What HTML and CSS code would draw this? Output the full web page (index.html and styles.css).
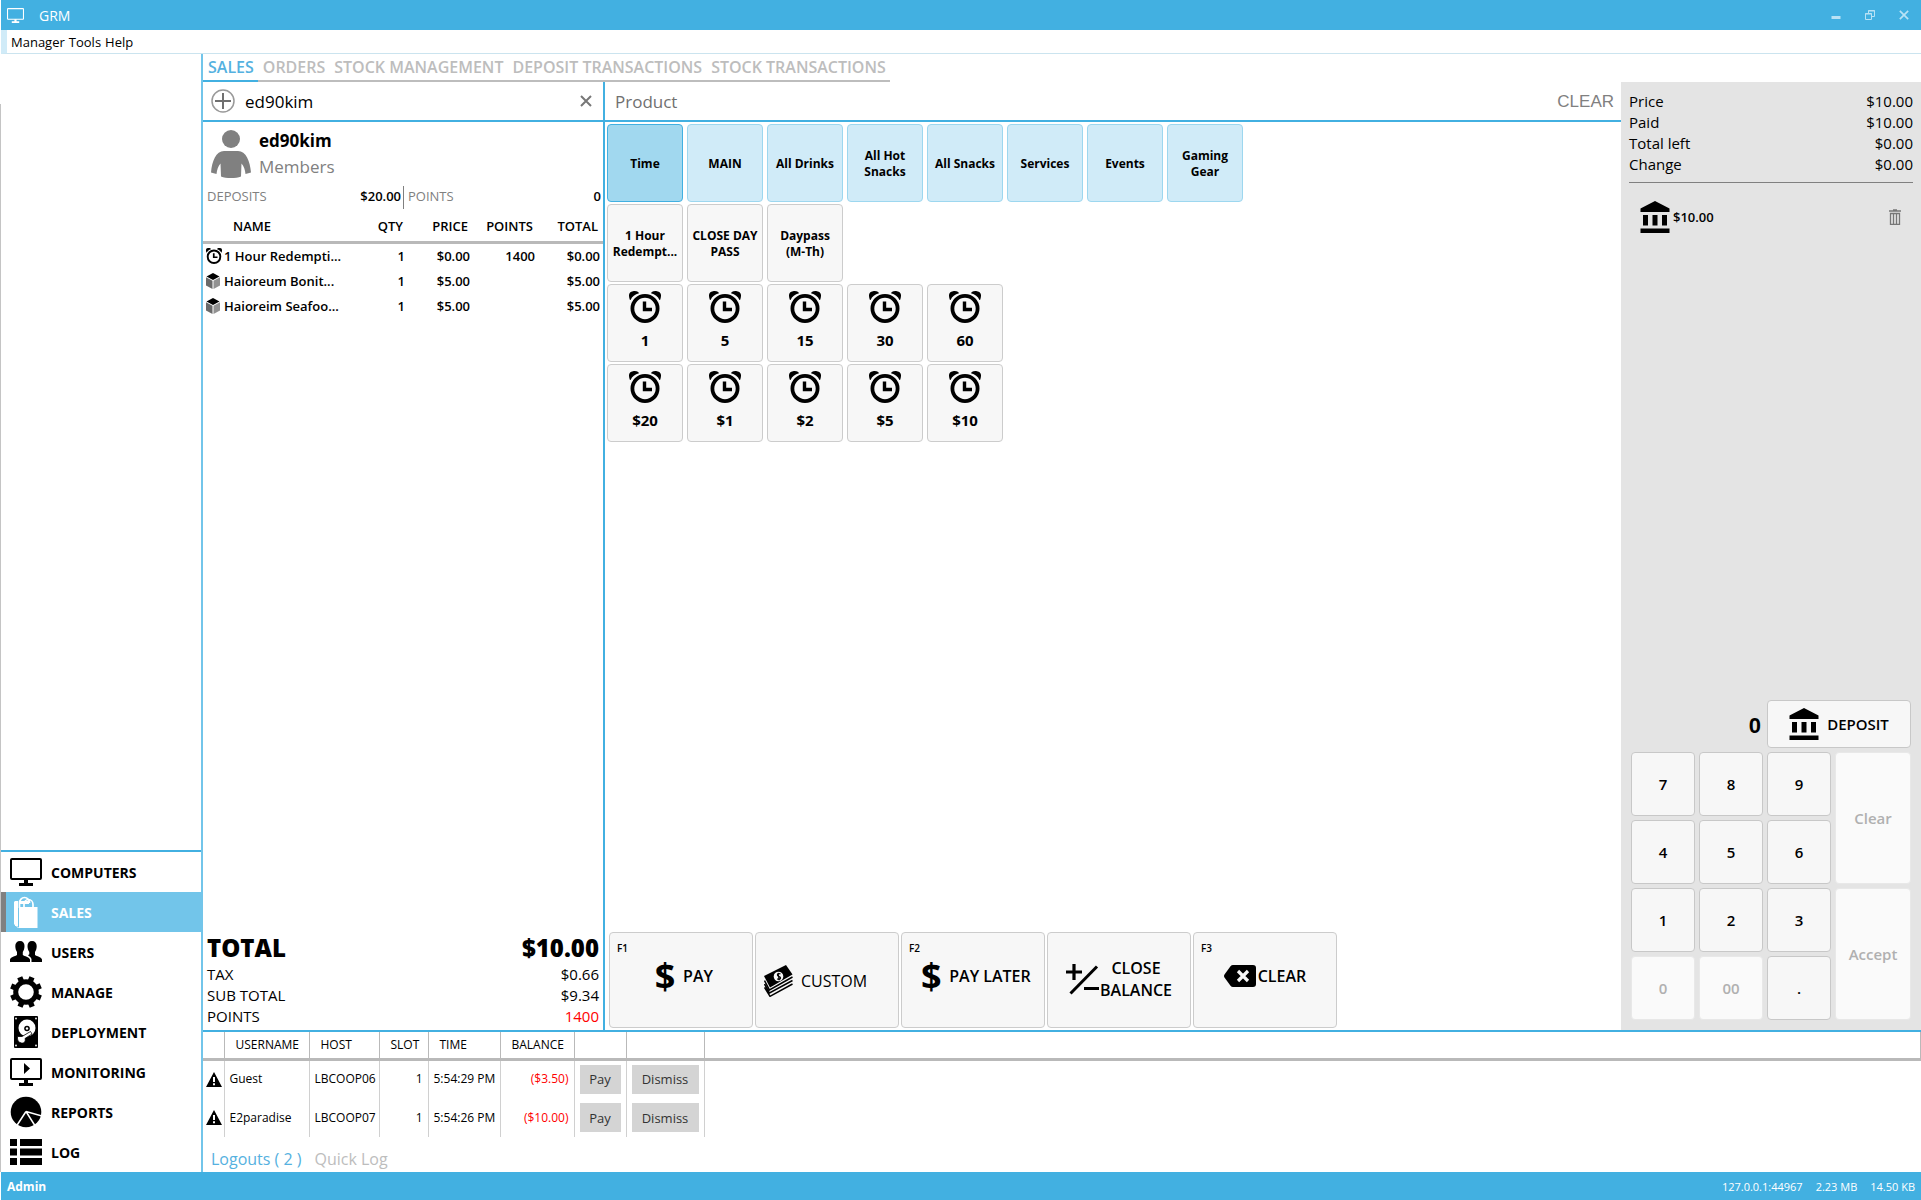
FILE: index.html
```html
<!DOCTYPE html>
<html lang="en">
<head>
<meta charset="utf-8">
<title>GRM</title>
<link rel="stylesheet" href="styles.css">
</head>
<body>
<svg class="defs" aria-hidden="true">
  <symbol id="monitor" viewBox="0 0 32 28"><rect x="1" y="1" width="30" height="20" rx="1" fill="none" stroke="currentColor" stroke-width="2"/><path d="M14 21h4v4h5v3H9v-3h5z" fill="currentColor"/></symbol>
  <symbol id="monitoring" viewBox="0 0 32 28"><rect x="1" y="1" width="30" height="20" rx="1" fill="none" stroke="currentColor" stroke-width="2"/><path d="M14 21h4v4h5v3H9v-3h5zM14 5l6 5.500-6 5.500z" fill="currentColor"/></symbol>
  <symbol id="bag" viewBox="0 0 32 32"><path d="M9.500 12V7a5 5.500 0 0 1 10 0M14 12V8.500a4.500 5 0 0 1 9 0V12" fill="none" stroke="currentColor" stroke-width="1.700"/><path d="M4.500 5H8v3H6.500l-.5 3v19l-1.500-2zM9 5h10v3H9z" fill="currentColor"/><path d="M5 8h3v22H5zM9 11H27.500v21H9z" fill="currentColor"/><path d="M4.500 6v22l4 4h2" fill="none" stroke="currentColor"/></symbol>
  <symbol id="users" viewBox="0 0 32 22"><path d="M10 0c3 0 4.500 2 4.500 5 0 2.500-.7 4.500-1.700 6v3c2 1.500 6 1.500 7.200 4.500V21H0v-2.500C1 15.500 5 15.500 7 14v-3C6 9.500 5.300 7.500 5.300 5 5.300 2 7 0 10 0z" fill="currentColor"/><path d="M22 0c3 0 4.700 2 4.700 5 0 2.500-.7 4.500-1.700 6v3c2 1.500 6 1.500 7 4.500V21H21.500v-3c-.5-2-2.500-3-3.500-3.800l1.300-1V11c-1-1.500-1.800-3.500-1.800-6C17.500 2 19 0 22 0z" fill="currentColor"/></symbol>
  <symbol id="gear" viewBox="0 0 32 32"><circle cx="16" cy="16" r="10.300" fill="none" stroke="currentColor" stroke-width="5"/><g fill="currentColor" transform="rotate(22 16 16)"><path id="teeth" d="M13.300 4.500V0h5.400v4.500zM13.300 27.500V32h5.400v-4.500zM4.500 13.300H0v5.400h4.500zM27.500 13.300H32v5.400h-4.500z"/><use href="#teeth" transform="rotate(45 16 16)"/></g></symbol>
  <symbol id="disk" viewBox="0 0 32 32"><rect x="4" width="24" height="32" rx="1" fill="currentColor"/><circle cx="17" cy="12" r="8.500" fill="#fff"/><circle cx="17" cy="12.500" r="2.800" fill="currentColor"/><circle cx="17" cy="12.500" r="1.200" fill="#fff"/><path d="M7.500 20.500h4.500l8.500-5 1.500 2.500-7 4.500c1 3-1 5-3.500 4.500C8.500 26.700 7 24 7.500 20.500z" fill="#fff" stroke="currentColor" stroke-width=".8"/><g fill="#fff"><circle cx="6" cy="2.500" r=".9"/><circle cx="26" cy="2.500" r=".9"/><circle cx="6" cy="29.500" r=".9"/><circle cx="26" cy="29.500" r=".9"/></g></symbol>
  <symbol id="pie" viewBox="0 0 32 32"><circle cx="16" cy="16" r="15.300" fill="currentColor"/><path d="M16 15.500l16 4.500M16 15.500l9.500 15M16 15.500L6.500 30" stroke="#fff" stroke-width="1.500"/></symbol>
  <symbol id="list" viewBox="0 0 32 26"><path d="M0 0h7v7H0zM10 0h22v7H10zM0 9.500h7v7H0zM10 9.500h22v7H10zM0 19h7v7H0zM10 19h22v7H10z" fill="currentColor"/></symbol>
  <symbol id="clock" viewBox="0 0 32 32"><circle cx="16" cy="17.500" r="12.600" fill="none" stroke="currentColor" stroke-width="3.800"/><path d="M15.500 10.500v8h7.500" fill="none" stroke="currentColor" stroke-width="3.400"/><path d="M.8 8.800C-.8 4-.2.600 4 .2c2-.3 4 0 5.200.7L10 2.300C6 3.200 3 5.500 1.600 9zM31.200 8.800C32.800 4 32.200.600 28 .2c-2-.3-4 0-5.200.7L22 2.300c4 .9 7 3.200 8.400 6.700z" fill="currentColor"/></symbol>
  <symbol id="cube" viewBox="0 0 14 16"><path d="M7 0l6.500 3.400L7 7 .5 3.400z" fill="#000"/><path d="M0 4.200l6.500 3.600V16L0 12.500z" fill="#6a6a6a"/><path d="M14 4.200L7.500 7.800V16l6.500-3.500z" fill="#929292"/></symbol>
  <symbol id="person" viewBox="0 0 40 48"><circle cx="20" cy="9" r="9" fill="currentColor"/><path d="M13 21h14c8 0 12 10 13 21.500l-5.500 1.500c-.5-4-1.500-8-4-10.500l-.5 13c-5 2-15 2-20 0l-.5-13C7 36 6 40 5.500 44L0 42.500C1 31 5 21 13 21z" fill="currentColor"/></symbol>
  <symbol id="bank" viewBox="0 0 30 32"><path d="M15 0l14.500 7.500V11H.5V7.500zM3 14h5v10.500H3zM12.500 14h5v10.500h-5zM22 14h5v10.500h-5zM.5 27.500h29V32H.5z" fill="currentColor"/></symbol>
  <symbol id="trash" viewBox="0 0 12 16"><path d="M0 2h12M4 1h4M1.500 4.500h9V15.500h-9zM4.500 5v10M7.500 5v10" fill="none" stroke="currentColor" stroke-width="1.300"/></symbol>
  <symbol id="plus" viewBox="0 0 24 24"><circle cx="12" cy="12" r="11" fill="none" stroke="#999" stroke-width="1.500"/><path d="M12 4v16M4 12h16" stroke="#707070" stroke-width="2"/></symbol>
  <symbol id="cross" viewBox="0 0 12 12"><path d="M1 1l10 10M11 1L1 11" stroke="currentColor" stroke-width="2"/></symbol>
  <symbol id="cash" viewBox="0 0 30 32"><path d="M0 11L22 0l6.500 9.500L6 22.500z" fill="currentColor"/><ellipse cx="14.500" cy="11.500" rx="4.800" ry="4.800" fill="#f7f7f7"/><path d="M16.500 9c-2-1.200-4 .3-2.600 1.800 1 1 2.600.6 2.600 2.200 0 1.500-2 1.800-3.300.8M14 7.800l1.300 7.500" fill="none" stroke="currentColor" stroke-width="1.200"/><path d="M.5 15.500l5 9.500L28.500 12M.5 19l5 9L28.500 15.500M.5 22.500L6 31.300 28.500 19" fill="none" stroke="currentColor" stroke-width="1.500"/></symbol>
  <symbol id="plusminus" viewBox="0 0 34 32"><path d="M0 9h16M8 1v16M18 25.500h15" stroke="currentColor" stroke-width="3.200"/><path d="M4.500 30.500L31 3.500" stroke="currentColor" stroke-width="3"/></symbol>
  <symbol id="erase" viewBox="0 0 32 22"><path d="M9 0h20a3 3 0 0 1 3 3v16a3 3 0 0 1-3 3H9q-1.500 0-2.500-1.200L.5 12.500q-1-1.500 0-3L6.500 1.200Q7.500 0 9 0z" fill="currentColor"/><path d="M14 6l10 10M24 6L14 16" stroke="#f7f7f7" stroke-width="3.200"/></symbol>
  <symbol id="warning" viewBox="0 0 16 15"><path d="M8 0l8 15H0z" fill="currentColor"/><path d="M8 5v5M8 11.300v2" stroke="#fff" stroke-width="2"/></symbol>
  <symbol id="minimize" viewBox="0 0 10 10"><path d="M.5 7.500h9" stroke="currentColor" stroke-width="3"/></symbol>
  <symbol id="restore" viewBox="0 0 10 10"><path d="M.5 3.500h6v6h-6zM3.500 3.500v-3h6v6h-3" fill="none" stroke="currentColor"/><path d="M3 1h7M0 4h7" stroke="currentColor"/></symbol>
</svg>

<div class="app">
  <header class="titlebar">
    <svg class="title-icon"><use href="#monitor"/></svg>
    <h1>GRM</h1>
    <div class="window-buttons">
      <button type="button" aria-label="Minimize"><svg><use href="#minimize"/></svg></button>
      <button type="button" aria-label="Restore"><svg><use href="#restore"/></svg></button>
      <button type="button" aria-label="Close"><svg><use href="#cross"/></svg></button>
    </div>
  </header>
  <nav class="menubar"><a href="#">Manager</a><a href="#">Tools</a><a href="#">Help</a></nav>

  <div class="body">
    <aside class="sidebar">
      <nav class="modules">
        <a href="#"><svg class="h28"><use href="#monitor"/></svg><span>COMPUTERS</span></a>
        <a href="#" class="active"><svg><use href="#bag"/></svg><span>SALES</span></a>
        <a href="#"><svg class="h22"><use href="#users"/></svg><span>USERS</span></a>
        <a href="#"><svg><use href="#gear"/></svg><span>MANAGE</span></a>
        <a href="#"><svg><use href="#disk"/></svg><span>DEPLOYMENT</span></a>
        <a href="#"><svg class="h28"><use href="#monitoring"/></svg><span>MONITORING</span></a>
        <a href="#"><svg><use href="#pie"/></svg><span>REPORTS</span></a>
        <a href="#"><svg class="h26"><use href="#list"/></svg><span>LOG</span></a>
      </nav>
    </aside>

    <main class="content">
      <nav class="tabs">
        <a href="#" class="active">SALES</a><a href="#">ORDERS</a><a href="#">STOCK MANAGEMENT</a><a href="#">DEPOSIT TRANSACTIONS</a><a href="#">STOCK TRANSACTIONS</a>
      </nav>

      <div class="workspace">
        <section class="order">
          <div class="search">
            <button type="button" aria-label="Add"><svg class="plus"><use href="#plus"/></svg></button>
            <input type="text" value="ed90kim" aria-label="Customer">
            <button type="button" aria-label="Remove customer"><svg class="cross"><use href="#cross"/></svg></button>
          </div>
          <div class="customer">
            <svg><use href="#person"/></svg>
            <div><h2>ed90kim</h2><p>Members</p></div>
          </div>
          <div class="balances">
            <div><span>DEPOSITS</span><b>$20.00</b></div>
            <div><span>POINTS</span><b>0</b></div>
          </div>
          <table class="lines">
            <thead><tr><th>NAME</th><th>QTY</th><th>PRICE</th><th>POINTS</th><th>TOTAL</th></tr></thead>
            <tbody>
              <tr><td><svg class="time"><use href="#clock"/></svg>1 Hour Redempti...</td><td>1</td><td>$0.00</td><td>1400</td><td>$0.00</td></tr>
              <tr><td><svg><use href="#cube"/></svg>Haioreum Bonit...</td><td>1</td><td>$5.00</td><td></td><td>$5.00</td></tr>
              <tr><td><svg><use href="#cube"/></svg>Haioreim Seafoo...</td><td>1</td><td>$5.00</td><td></td><td>$5.00</td></tr>
            </tbody>
          </table>
          <dl class="totals">
            <div class="grand"><dt>TOTAL</dt><dd>$10.00</dd></div>
            <div><dt>TAX</dt><dd>$0.66</dd></div>
            <div><dt>SUB TOTAL</dt><dd>$9.34</dd></div>
            <div><dt>POINTS</dt><dd class="red">1400</dd></div>
          </dl>
        </section>

        <section class="products">
          <div class="product-search">
            <input type="text" placeholder="Product" aria-label="Product">
            <button type="button">CLEAR</button>
          </div>
          <div class="tile-rows">
            <div class="tiles groups">
              <button type="button" class="selected">Time</button><button type="button">MAIN</button><button type="button">All Drinks</button><button type="button">All Hot Snacks</button><button type="button">All Snacks</button><button type="button">Services</button><button type="button">Events</button><button type="button">Gaming Gear</button>
            </div>
            <div class="tiles">
              <button type="button">1 Hour Redempt...</button><button type="button">CLOSE DAY PASS</button><button type="button">Daypass<br>(M-Th)</button>
            </div>
            <div class="tiles times">
              <button type="button"><svg><use href="#clock"/></svg>1</button><button type="button"><svg><use href="#clock"/></svg>5</button><button type="button"><svg><use href="#clock"/></svg>15</button><button type="button"><svg><use href="#clock"/></svg>30</button><button type="button"><svg><use href="#clock"/></svg>60</button>
            </div>
            <div class="tiles times">
              <button type="button"><svg><use href="#clock"/></svg>$20</button><button type="button"><svg><use href="#clock"/></svg>$1</button><button type="button"><svg><use href="#clock"/></svg>$2</button><button type="button"><svg><use href="#clock"/></svg>$5</button><button type="button"><svg><use href="#clock"/></svg>$10</button>
            </div>
          </div>
          <div class="actions">
            <button type="button"><kbd>F1</kbd><span class="dollar">$</span>PAY</button>
            <button type="button" class="custom"><svg class="cash"><use href="#cash"/></svg>CUSTOM</button>
            <button type="button"><kbd>F2</kbd><span class="dollar">$</span>PAY LATER</button>
            <button type="button" class="close"><svg class="plusminus"><use href="#plusminus"/></svg><span>CLOSE<br>BALANCE</span></button>
            <button type="button"><kbd>F3</kbd><svg class="erase"><use href="#erase"/></svg>CLEAR</button>
          </div>
        </section>

        <aside class="payment">
          <dl class="amounts">
            <div><dt>Price</dt><dd>$10.00</dd></div>
            <div><dt>Paid</dt><dd>$10.00</dd></div>
            <div><dt>Total left</dt><dd>$0.00</dd></div>
            <div><dt>Change</dt><dd>$0.00</dd></div>
          </dl>
          <div class="paid-line">
            <svg class="bank"><use href="#bank"/></svg><span>$10.00</span>
            <button type="button" aria-label="Delete payment"><svg class="trash"><use href="#trash"/></svg></button>
          </div>
          <div class="keypad">
            <output>0</output>
            <button type="button" class="deposit"><svg class="bank"><use href="#bank"/></svg>DEPOSIT</button>
            <button type="button">7</button><button type="button">8</button><button type="button">9</button>
            <button type="button" class="tall" disabled>Clear</button>
            <button type="button">4</button><button type="button">5</button><button type="button">6</button>
            <button type="button">1</button><button type="button">2</button><button type="button">3</button>
            <button type="button" class="tall" disabled>Accept</button>
            <button type="button" disabled>0</button><button type="button" disabled>00</button><button type="button">.</button>
          </div>
        </aside>
      </div>

      <section class="logouts">
        <table>
          <colgroup><col class="c-icon"><col class="c-user"><col class="c-host"><col class="c-slot"><col class="c-time"><col class="c-balance"><col class="c-pay"><col class="c-dismiss"><col></colgroup>
          <thead><tr><th></th><th>USERNAME</th><th>HOST</th><th>SLOT</th><th>TIME</th><th>BALANCE</th><th></th><th></th><th></th></tr></thead>
          <tbody>
            <tr><td><svg><use href="#warning"/></svg></td><td>Guest</td><td>LBCOOP06</td><td class="num">1</td><td>5:54:29 PM</td><td class="num red">($3.50)</td><td><button type="button">Pay</button></td><td><button type="button">Dismiss</button></td><td></td></tr>
            <tr><td><svg><use href="#warning"/></svg></td><td>E2paradise</td><td>LBCOOP07</td><td class="num">1</td><td>5:54:26 PM</td><td class="num red">($10.00)</td><td><button type="button">Pay</button></td><td><button type="button">Dismiss</button></td><td></td></tr>
          </tbody>
        </table>
        <nav class="log-tabs"><a href="#" class="active">Logouts ( 2 )</a><a href="#">Quick Log</a></nav>
      </section>
    </main>
  </div>

  <footer class="statusbar"><b>Admin</b><span>127.0.0.1:44967</span><span>2.23 MB</span><span>14.50 KB</span></footer>
</div>
</body>
</html>
```
FILE: styles.css
```css
* { box-sizing: border-box; }
body { margin: 0; background: #fff; color: #000; font: 13px/20px "Open Sans", "Noto Sans", sans-serif; }
h1, h2, p, dl, dt, dd { margin: 0; font-weight: inherit; }
a { color: inherit; text-decoration: none; }
button { padding: 0; border: 0; background: none; color: inherit; font: inherit; }
input { min-width: 0; padding: 0; border: 0; outline: 0; background: none; font: inherit; }
svg { display: block; flex: none; }
table { border-collapse: collapse; border-spacing: 0; }
.defs { position: absolute; width: 0; height: 0; }
.red { color: #f00; }

.app { display: flex; flex-direction: column; min-height: 100vh; padding-left: 1px; }

.titlebar { display: flex; align-items: center; height: 30px; padding: 0 7px 0 6px; background: #42b0e1; color: #fff; }
.title-icon { width: 17px; height: 15px; margin-right: 15px; }
.titlebar h1 { padding-top: 2px; font-size: 14px; }
.window-buttons { display: flex; gap: 14px; margin-left: auto; color: #b9e2f5; }
.window-buttons button { display: grid; place-items: center; width: 20px; height: 20px; }
.window-buttons svg { width: 10px; height: 10px; }

.menubar { display: flex; gap: 4px; height: 24px; padding: 2px 0 0 4px; border-left: 6px solid #d0ebf8; border-bottom: 1px solid #cbe4ef; }

.body { display: flex; flex: 1; }
.sidebar { display: flex; align-items: flex-end; margin: 50px 0 0 -1px; border-left: 1px solid #c4c4c4; flex: 0 0 201px; }
.modules { width: 100%; border-top: 2px solid #42b0e1; font-size: 14px; font-weight: 700; }
.modules a { display: flex; align-items: center; gap: 9px; height: 40px; padding-left: 9px; }
.modules a.active { padding-left: 4px; border-left: 5px solid #808080; background: #72c5ea; color: #fff; }
.modules span { padding-top: 2px; }
.modules svg { width: 32px; height: 32px; }
.modules .h28 { height: 28px; }
.modules .h26 { height: 26px; }
.modules .h22 { height: 22px; }

.content { display: flex; flex: 1; flex-direction: column; min-width: 0; border-left: 2px solid #72c5ea; }
.tabs { display: flex; align-self: flex-start; color: #bdbdbd; font-size: 16px; font-weight: 600; }
.tabs a { height: 28px; padding: 3px 4px 0 5px; border-bottom: 2px solid #bdbdbd; }
.tabs a.active { color: #55b1e0; border-color: #42b0e1; }

.workspace { display: flex; flex: 1; border-bottom: 2px solid #42b0e1; }
.order { display: flex; flex: 0 0 402px; flex-direction: column; border-right: 2px solid #42b0e1; }
.search, .product-search { display: flex; align-items: center; height: 40px; border-bottom: 2px solid #42b0e1; font-size: 17px; }
.search { padding: 0 11px 0 8px; }
.search input { flex: 1; margin-left: 10px; padding-top: 2px; }
.plus { width: 24px; height: 24px; }
.cross { width: 12px; height: 12px; color: #777; }
.customer { display: flex; gap: 8px; padding: 8px 8px 0; color: #808080; font-size: 17px; line-height: 26px; }
.customer svg { width: 40px; height: 48px; }
.customer h2 { margin-top: -2px; color: #000; font-size: 17px; font-weight: 700; }
.balances { display: grid; grid-template-columns: 200px 1fr; margin-top: 6px; }
.balances div { display: flex; justify-content: space-between; height: 23px; padding: 0 2px 0 4px; color: #808080; }
.balances div + div { border-left: 1px solid #808080; }
.balances b { color: #000; font-weight: 600; }
.lines { width: 100%; margin-top: 3px; table-layout: fixed; font-weight: 600; }
.lines th { height: 30px; padding: 0 5px 0 0; border-bottom: 3px solid #b9b9b9; font-weight: 600; text-align: right; }
.lines th:first-child { width: 137px; padding-left: 30px; text-align: left; }
.lines th:nth-child(n+3) { width: 65px; }
.lines td { height: 25px; padding: 0 3px 0 0; text-align: right; white-space: nowrap; }
.lines td:first-child { display: flex; align-items: center; gap: 4px; padding-left: 3px; }
.lines svg { width: 14px; height: 16px; }
.lines .time { width: 16px; margin-right: -2px; }
.totals { margin-top: auto; padding: 0 4px 3px; font-size: 15px; line-height: 21px; }
.totals div, .amounts div { display: flex; justify-content: space-between; }
.totals .grand { font-size: 24px; font-weight: 800; line-height: 32px; }

.products { display: flex; flex: 1; flex-direction: column; min-width: 0; }
.product-search { padding: 0 7px 0 10px; color: #707070; }
.product-search input { flex: 1; padding-top: 2px; }
.product-search input::placeholder { color: #707070; opacity: 1; }
.product-search button { padding-top: 2px; color: #808080; font-family: "Liberation Sans", sans-serif; font-size: 17px; }
.tile-rows { display: grid; gap: 2px; padding: 2px; }
.tiles { display: flex; gap: 4px; }
.tiles button { width: 76px; height: 78px; padding: 2px 2px 0; border: 1px solid #ccc; border-radius: 4px; background: #f7f7f7; font-size: 12px; font-weight: 700; line-height: 16px; }
.groups button { border-color: #9dd7ef; background: #d0ebf8; }
.groups .selected { border-color: #42b0e1; background: #a1d8ef; }
.times button { display: flex; flex-direction: column; align-items: center; justify-content: flex-start; gap: 9px; padding-top: 6px; font-size: 15px; }
.times svg { width: 32px; height: 32px; }
.actions { display: flex; gap: 2px; margin-top: auto; padding: 2px 4px; }
.actions button { position: relative; display: flex; align-items: center; justify-content: center; gap: 2px; width: 144px; height: 96px; padding-bottom: 8px; border: 1px solid #ccc; border-radius: 4px; background: #f7f7f7; font-size: 16px; font-weight: 600; line-height: 22px; }
.actions kbd { position: absolute; top: 5px; left: 7px; font: 600 10px/20px "Open Sans", sans-serif; }
.dollar { width: 32px; font-size: 36px; font-weight: 700; text-align: center; }
.actions .custom { justify-content: flex-start; gap: 7px; padding: 2px 8px 0; font-weight: 400; }
.actions .close { gap: 0; padding-bottom: 2px; }
.cash { width: 30px; height: 32px; }
.plusminus { width: 34px; height: 32px; }
.erase { width: 32px; height: 22px; }

.payment { display: flex; flex: 0 0 300px; flex-direction: column; padding: 9px 8px 10px; background: #e4e4e4; }
.amounts { padding-bottom: 7px; border-bottom: 1px solid #808080; font-size: 15px; line-height: 21px; }
.paid-line { display: flex; align-items: center; gap: 3px; padding: 18px 12px 0 11px; font-weight: 600; }
.paid-line button { margin-left: auto; color: #777; }
.bank { width: 30px; height: 32px; }
.trash { width: 12px; height: 16px; }
.keypad { display: grid; grid-template-columns: 64px 64px 64px 76px; grid-template-rows: 48px repeat(4, 64px); gap: 4px; margin-top: auto; padding-left: 2px; font-size: 15px; font-weight: 600; }
.keypad output { grid-column: span 2; align-self: center; padding: 3px 2px 0; font: 700 22px/22px "Liberation Sans", sans-serif; text-align: right; }
.keypad button { border: 1px solid #c8c8c8; border-radius: 4px; background: #f7f7f7; }
.keypad button:disabled { border-color: #e8e8e8; background: #fafafa; color: #b0b0b0; }
.keypad .deposit { display: flex; grid-column: span 2; align-items: center; justify-content: center; gap: 8px; }
.keypad .tall { grid-column: 4; grid-row: span 2; }

.logouts { height: 140px; }
.logouts table { width: 100%; table-layout: fixed; font-size: 12px; }
.c-icon { width: 21px; } .c-user { width: 85px; } .c-host { width: 70px; } .c-slot { width: 49px; }
.c-time { width: 72px; } .c-balance { width: 74px; } .c-pay { width: 52px; } .c-dismiss { width: 78px; }
.logouts th { height: 27px; padding: 0 0 0 11px; border-right: 1px solid #b9b9b9; border-bottom: 3px solid #b9b9b9; font-weight: 400; text-align: left; }
.logouts td { height: 39px; padding: 0 5px; border-right: 1px solid #d0d0d0; white-space: nowrap; }
.logouts td:last-child { border: 0; }
.logouts td:first-child { padding: 0 3px; }
.logouts .num { text-align: right; }
.logouts svg { width: 16px; height: 15px; }
.logouts td button { width: 100%; height: 29px; background: #d4d4d4; color: #333; font-size: 13px; }
.log-tabs { display: flex; gap: 13px; padding: 12px 8px; color: #bdbdbd; font-size: 16px; }
.log-tabs .active { color: #55b1e0; }

.statusbar { display: flex; align-items: center; gap: 13px; height: 28px; padding: 2px 6px 0; background: #42b0e1; color: #fff; font-size: 11px; }
.statusbar b { margin-right: auto; font-size: 12px; }
```
